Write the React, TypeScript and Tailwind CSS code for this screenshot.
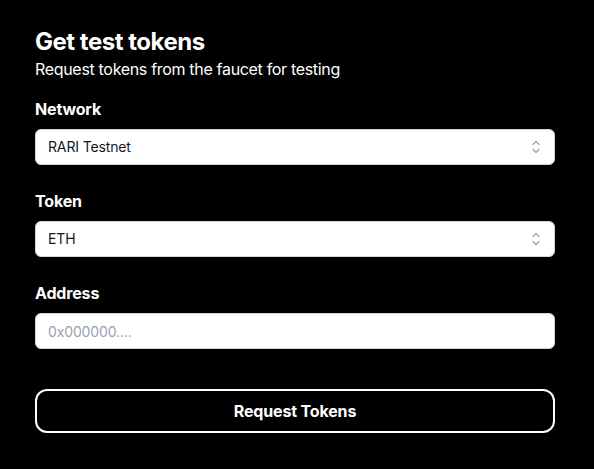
import React from "react";

const Chevrons = () => (
  <svg width="12" height="18" viewBox="0 0 12 18" fill="none" className="text-gray-400">
    <path d="M3 6.5L6 3.5l3 3" stroke="currentColor" strokeWidth="1.2" strokeLinecap="round" strokeLinejoin="round" />
    <path d="M3 11.5L6 14.5l3-3" stroke="currentColor" strokeWidth="1.2" strokeLinecap="round" strokeLinejoin="round" />
  </svg>
);

const Select = ({ value }: { value: string }) => (
  <div className="flex h-9 items-center justify-between rounded-md border border-gray-300 bg-white pl-3 pr-3 text-sm tracking-[-0.01em] text-gray-900">
    <span>{value}</span>
    <Chevrons />
  </div>
);

export default function App() {
  return (
    <div className="min-h-[469px] bg-black text-white" style={{ fontFamily: "Inter, 'Noto Sans', sans-serif" }}>
      <div className="w-[520px] pl-[35px] pt-[28px] box-content">
        <h1 className="text-2xl leading-7 font-bold tracking-[-0.02em]">Get test tokens</h1>
        <p className="text-base leading-6 mt-px tracking-[-0.02em]">Request tokens from the faucet for testing</p>

        <label className="mt-4 block font-bold leading-6 tracking-[-0.01em]">Network</label>
        <div className="mt-2">
          <Select value="RARI Testnet" />
        </div>

        <label className="mt-6 block font-bold leading-6 tracking-[-0.01em]">Token</label>
        <div className="mt-2">
          <Select value="ETH" />
        </div>

        <label className="mt-6 block font-bold leading-6 tracking-[-0.01em]">Address</label>
        <input
          className="mt-2 block h-9 w-full rounded-md border border-gray-300 bg-white px-3 text-sm tracking-[-0.01em] text-gray-900 placeholder:text-gray-400 outline-none"
          placeholder="0x000000...."
        />

        <button className="mt-10 flex h-[44px] w-full items-center justify-center rounded-xl border-2 border-white font-bold tracking-[-0.01em]">
          Request Tokens
        </button>
      </div>
    </div>
  );
}
